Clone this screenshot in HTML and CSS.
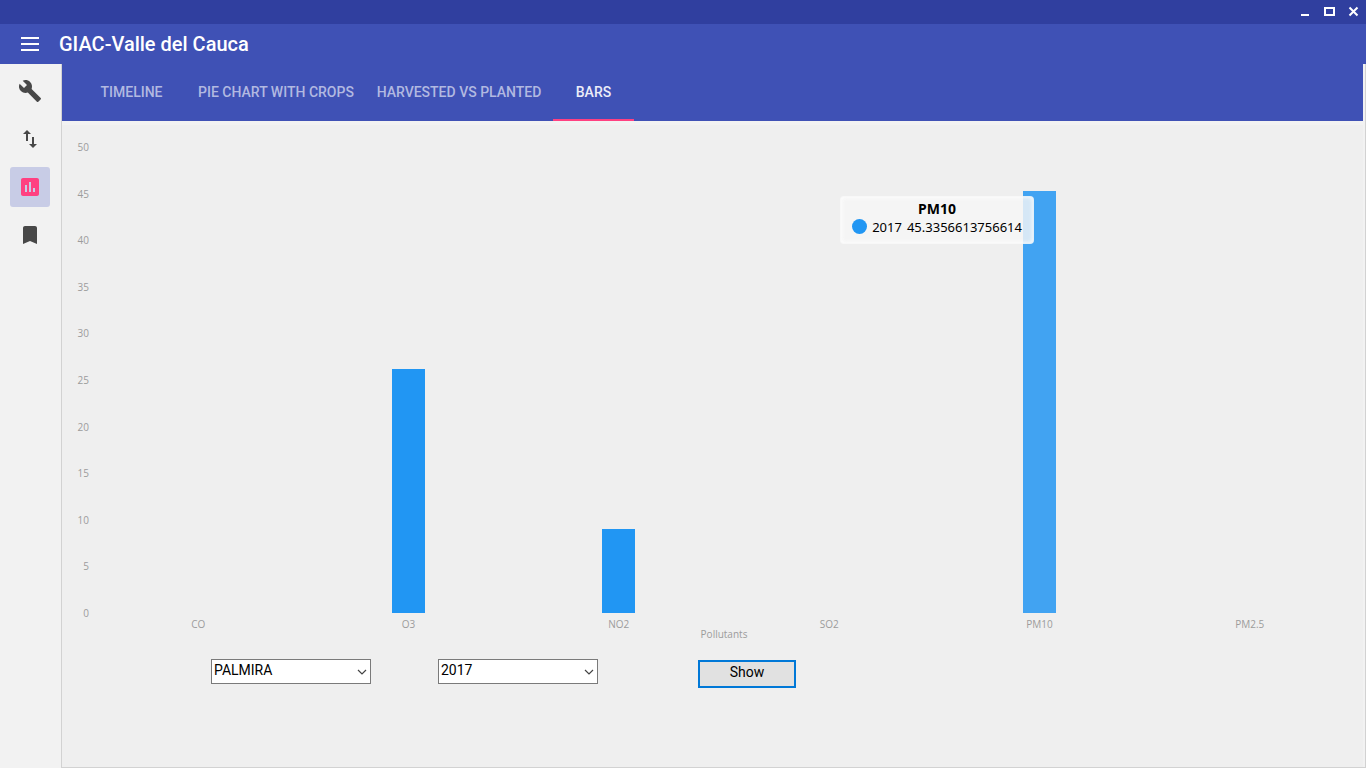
FILE: index.html
```html
<!DOCTYPE html>
<html lang="en">
<head>
<meta charset="utf-8">
<meta name="viewport" content="width=device-width, initial-scale=1">
<title>GIAC-Valle del Cauca</title>
<link rel="stylesheet" href="styles.css">
</head>
<body>
<div class="window-bar">
  <button class="window-button" aria-label="Minimize"><svg width="12" height="12" shape-rendering="crispEdges"><path d="M1 8h8v2H1z" fill="#fff"/></svg></button>
  <button class="window-button" aria-label="Maximize"><svg width="12" height="12" shape-rendering="crispEdges"><path d="M0 1h11v9H0zM2 3v5h7V3z" fill="#fff" fill-rule="evenodd"/></svg></button>
  <button class="window-button" aria-label="Close"><svg width="12" height="12"><path d="M1.500 1.500l8 8M9.500 1.500l-8 8" stroke="#fff" stroke-width="2"/></svg></button>
</div>
<header class="app-bar">
  <button class="menu-button" aria-label="Menu"><svg width="18" height="14" shape-rendering="crispEdges"><path d="M0 0h18v2H0zM0 6h18v2H0zM0 12h18v2H0z" fill="#fff"/></svg></button>
  <h1 class="app-title">GIAC-Valle del Cauca</h1>
</header>
<div class="workspace">
  <nav class="side-nav" aria-label="Sections">
    <button class="nav-button" aria-label="Settings"><svg class="nav-icon" viewBox="0 0 24 24"><path d="M22.7 19l-9.1-9.1c.9-2.3.4-5-1.5-6.9-2-2-5-2.4-7.4-1.3L9 6 6 9 1.6 4.7C.4 7.1.9 10.1 2.9 12.1c1.9 1.9 4.6 2.4 6.9 1.5l9.1 9.1c.4.4 1 .4 1.4 0l2.3-2.3c.5-.4.5-1.1.1-1.4z"/></svg></button>
    <button class="nav-button" aria-label="Transfer"><svg class="nav-icon" viewBox="0 0 24 24"><path d="M16 17.01V10h-2v7.01h-3L15 21l4-3.99h-3zM9 3L5 6.99h3V14h2V6.99h3L9 3z"/></svg></button>
    <button class="nav-button nav-button-active" aria-label="Charts" aria-current="page"><svg class="nav-icon" viewBox="0 0 24 24"><path d="M19 3H5c-1.100 0-2 .9-2 2v14c0 1.100.9 2 2 2h14c1.100 0 2-.9 2-2V5c0-1.100-.9-2-2-2zM9 17H7v-7h2v7zm4 0h-2V7h2v10zm4 0h-2v-4h2v4z"/></svg></button>
    <button class="nav-button" aria-label="Bookmarks"><svg class="nav-icon" viewBox="0 0 24 24"><path d="M17 3H7c-1.100 0-1.990.9-1.990 2L5 21l7-3 7 3V5c0-1.100-.9-2-2-2z"/></svg></button>
  </nav>
  <main class="main">
    <div class="tabs" role="tablist">
      <button class="tab tab-timeline" role="tab">TIMELINE</button>
      <button class="tab tab-crops" role="tab">PIE CHART WITH CROPS</button>
      <button class="tab tab-harvest" role="tab">HARVESTED VS PLANTED</button>
      <button class="tab tab-bars" role="tab" aria-selected="true">BARS</button>
    </div>
    <section class="panel">
      <div class="chart">
        <div class="y-axis">
          <span>50</span><span>45</span><span>40</span><span>35</span><span>30</span><span>25</span><span>20</span><span>15</span><span>10</span><span>5</span><span>0</span>
        </div>
        <div class="plot">
          <div class="slot"></div>
          <div class="slot"><div class="bar" style="height:52.4%"></div></div>
          <div class="slot"><div class="bar" style="height:18.1%"></div></div>
          <div class="slot"></div>
          <div class="slot">
            <div class="bar bar-hover" style="height:90.6%">
              <div class="tooltip" role="tooltip">
                <strong class="tooltip-title">PM10</strong>
                <div class="tooltip-row"><i class="dot"></i><span>2017</span><span>45.3356613756614</span></div>
              </div>
            </div>
          </div>
          <div class="slot"></div>
        </div>
        <div class="x-axis">
          <div class="categories"><span>CO</span><span>O3</span><span>NO2</span><span>SO2</span><span>PM10</span><span>PM2.5</span></div>
          <div class="axis-title">Pollutants</div>
        </div>
      </div>
      <form class="controls">
        <div class="select-box">
          <select class="select" aria-label="Municipality"><option>PALMIRA</option></select>
          <svg class="chevron" width="10" height="6"><path d="M1 1l4 4 4-4" fill="none" stroke="#444" stroke-width="1.200"/></svg>
        </div>
        <div class="select-box">
          <select class="select" aria-label="Year"><option>2017</option></select>
          <svg class="chevron" width="10" height="6"><path d="M1 1l4 4 4-4" fill="none" stroke="#444" stroke-width="1.200"/></svg>
        </div>
        <button class="show-button" type="button">Show</button>
      </form>
    </section>
  </main>
</div>
</body>
</html>
```
FILE: styles.css
```css
* { box-sizing: border-box; }

body {
  margin: 0;
  height: 100vh;
  display: flex;
  flex-direction: column;
  background: #f2f2f2;
  font-family: Roboto, sans-serif;
  font-size: 14px;
}

button {
  border: 0;
  padding: 0;
  background: none;
  font: inherit;
}

svg { display: block; }

.window-bar {
  height: 24px;
  flex: none;
  display: flex;
  justify-content: flex-end;
  background: #303f9f;
}

.window-button {
  width: 24px;
  display: grid;
  place-items: center;
}

.app-bar {
  height: 40px;
  flex: none;
  display: flex;
  align-items: center;
  gap: 20px;
  padding-left: 21px;
  background: #3f51b5;
}

.app-title {
  margin: 0;
  color: #fff;
  font-size: 20px;
  font-weight: 500;
}

.workspace {
  flex: 1;
  min-height: 0;
  display: flex;
}

.side-nav {
  width: 61px;
  flex: none;
  display: flex;
  flex-direction: column;
  align-items: center;
  gap: 8px;
  padding: 7px 1px 0 0;
}

.nav-button {
  width: 40px;
  height: 40px;
  display: grid;
  place-items: center;
  border-radius: 3px;
}

.nav-icon {
  width: 24px;
  height: 24px;
  fill: #484848;
}

.nav-button-active { background: #c8cce6; }
.nav-button-active .nav-icon { fill: #ff4081; }

.main {
  flex: 1;
  min-width: 0;
  display: flex;
  flex-direction: column;
  padding-right: 2px;
  border: solid #d2d2d2;
  border-width: 0 1px 1px;
}

.tabs {
  height: 57px;
  flex: none;
  display: flex;
  padding-left: 14px;
  background: #3f51b5;
}

.tab {
  border-bottom: 2px solid transparent;
  color: #b2b9e1;
  font-weight: 500;
  white-space: nowrap;
}

.tab-timeline { width: 111px; }
.tab-crops { width: 178px; }
.tab-harvest { width: 188px; }
.tab-bars {
  width: 81px;
  border-bottom-color: #ff4081;
  color: #ececf8;
}

.panel {
  flex: 1;
  min-height: 0;
  display: flex;
  flex-direction: column;
  padding: 22px 8px 79px 0;
  border-top: 4px solid #f2f2f2;
  background: #efefef;
}

.chart {
  flex: 1;
  min-height: 0;
  display: grid;
  grid-template: 1fr auto / 31px 1fr;
  color: #9c9c9c;
  font-family: "Open Sans", sans-serif;
  font-size: 10px;
  line-height: 10px;
}

.y-axis {
  display: flex;
  flex-direction: column;
  justify-content: space-between;
  margin: -5px 0;
  padding-right: 4px;
  text-align: right;
}

.plot { display: flex; }

.slot {
  flex: 1;
  display: flex;
  justify-content: center;
  align-items: flex-end;
}

.bar {
  position: relative;
  width: 33px;
  background: #2196f3;
}

.bar-hover { background: #41a3f2; }

.tooltip {
  position: absolute;
  top: 5px;
  right: 22px;
  padding: 3px 11px 7px;
  border: 1px solid rgba(255, 255, 255, 0.3);
  border-radius: 4px;
  background: rgba(247, 247, 247, 0.82);
  box-shadow: inset 0 0 4px #fff;
  color: #000;
  font-family: "Noto Sans", sans-serif;
  font-size: 13px;
  line-height: 18px;
  text-align: center;
  white-space: nowrap;
}

.tooltip-title {
  display: block;
  font-size: 14px;
}

.tooltip-row {
  display: flex;
  align-items: center;
  gap: 5px;
}

.dot {
  width: 15px;
  height: 15px;
  border-radius: 50%;
  background: #2196f3;
}

.x-axis {
  grid-column: 2;
  padding-top: 6px;
  text-align: center;
}

.categories { display: flex; }
.categories span { flex: 1; }

.controls {
  display: flex;
  align-items: flex-start;
  margin-top: 20px;
  padding-left: 149px;
}

.select-box {
  position: relative;
  width: 160px;
  margin-right: 67px;
}

.select {
  appearance: none;
  display: block;
  width: 100%;
  height: 25px;
  padding: 0 0 4px 2px;
  border: 1px solid #7a7a7a;
  border-radius: 0;
  background: #fff;
  color: #000;
  font: inherit;
}

.chevron {
  position: absolute;
  top: 10px;
  right: 4px;
  pointer-events: none;
}

.show-button {
  width: 98px;
  height: 28px;
  margin: 1px 0 0 33px;
  padding-bottom: 5px;
  border: 2px solid #0078d7;
  background: #e1e1e1;
  color: #000;
}
```
